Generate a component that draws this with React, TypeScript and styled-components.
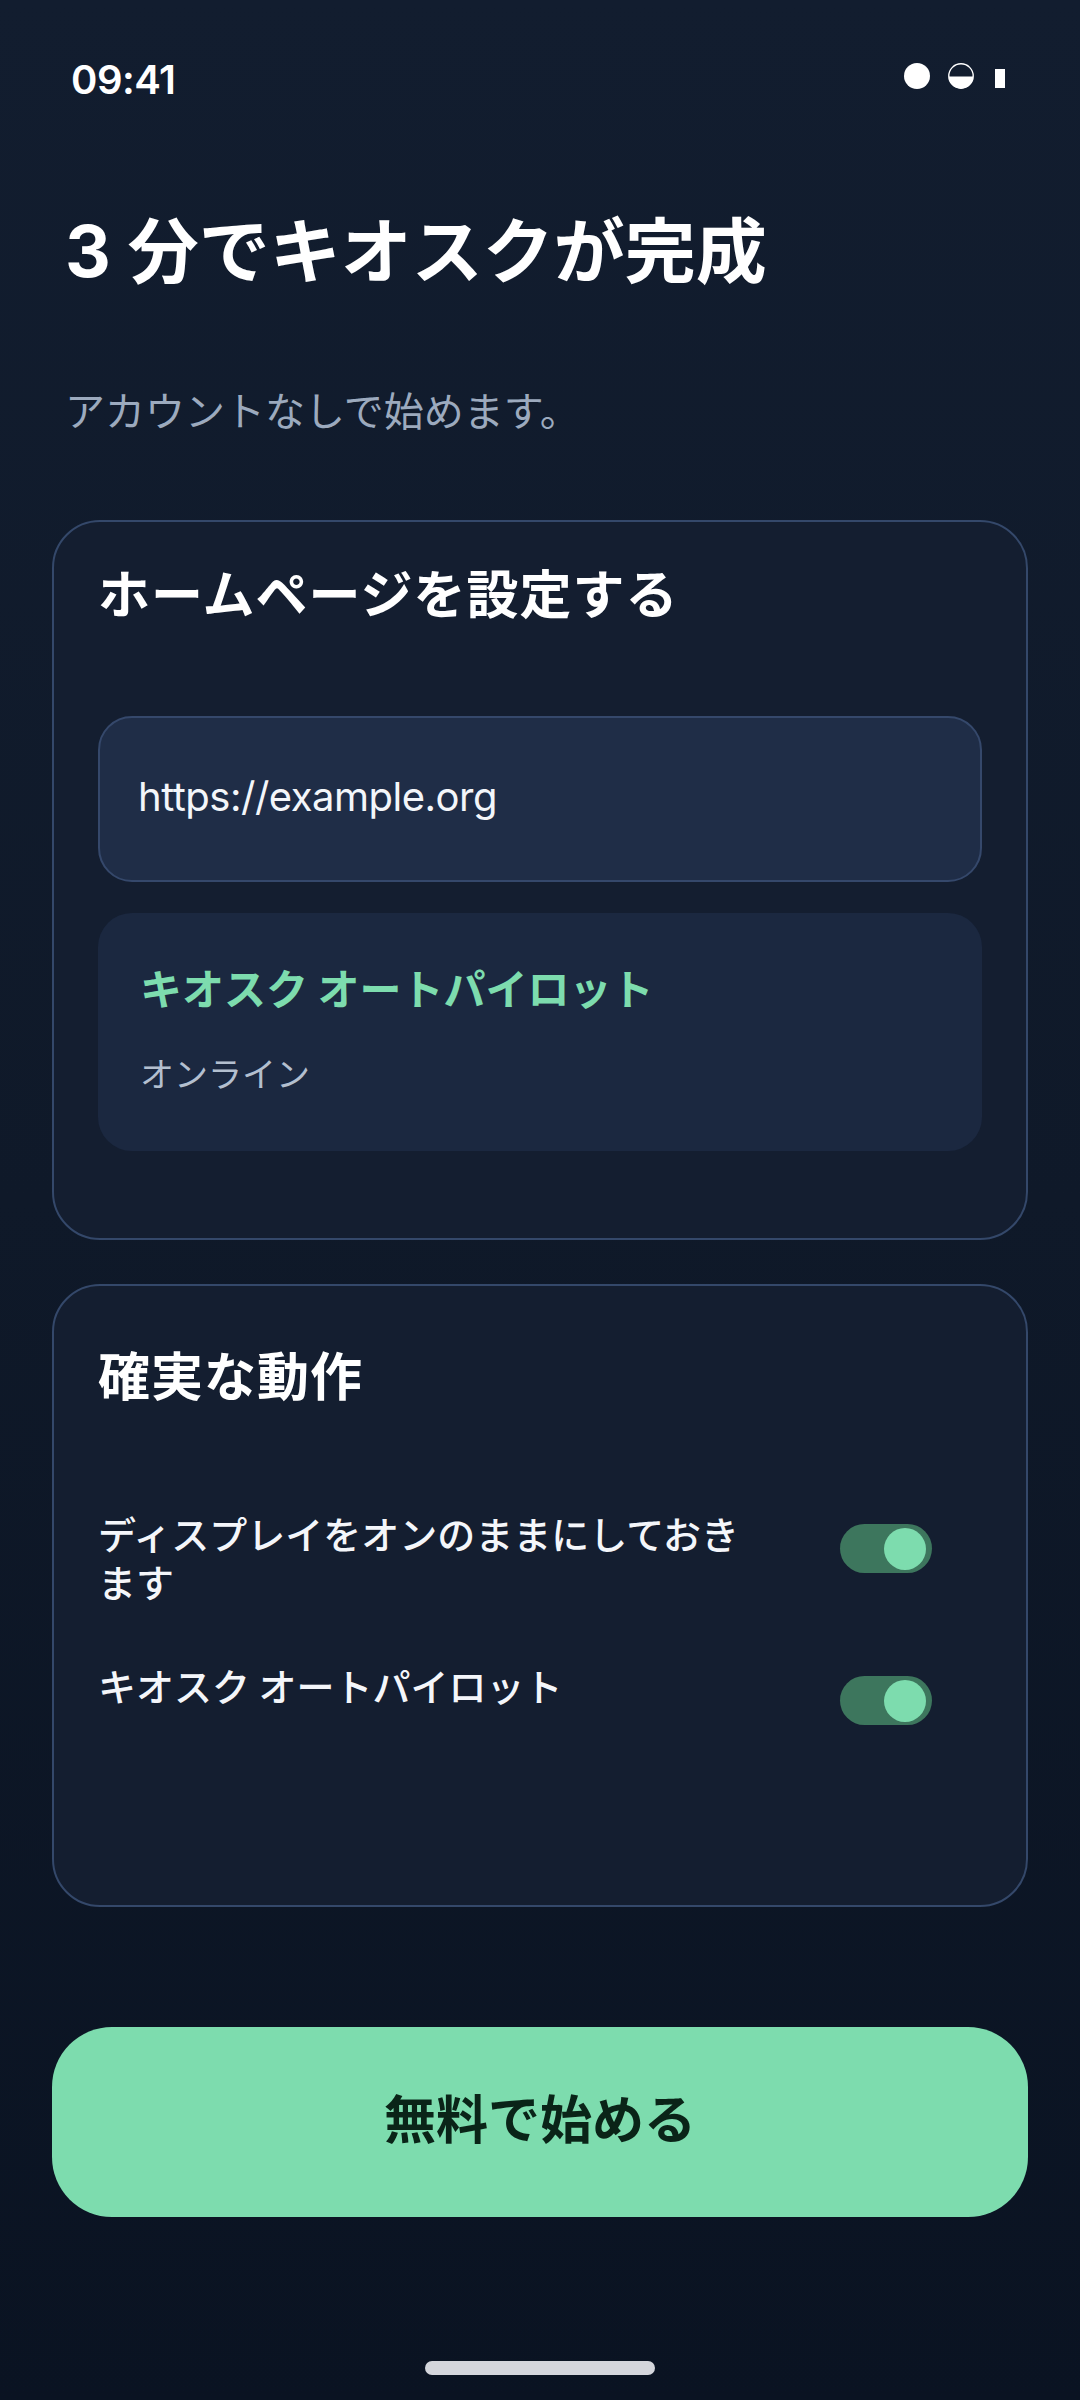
import React, { useState } from "react";
import styled, { createGlobalStyle } from "styled-components";

const GlobalStyle = createGlobalStyle`
  html, body {
    margin: 0;
    padding: 0;
    background: #0b1423;
  }
  body {
    font-family: "Inter", "Noto Sans CJK JP", sans-serif;
    -webkit-font-smoothing: antialiased;
  }
  * {
    box-sizing: border-box;
  }
`;

const Screen = styled.div`
  width: 1080px;
  min-height: 2400px;
  display: flex;
  flex-direction: column;
  background: linear-gradient(180deg, #121d2f 0%, #0f1929 50%, #0a1322 100%);
  color: #f1f5f9;
`;

const StatusBar = styled.div`
  height: 156px;
  padding: 0 75px 0 71px;
  display: flex;
  align-items: center;
  justify-content: space-between;
`;

const Time = styled.span`
  font-family: "Inter", sans-serif;
  font-size: 40px;
  font-weight: 600;
  letter-spacing: -0.5px;
  color: #ffffff;
  margin-top: 2px;
`;

const StatusIcons = styled.div`
  display: flex;
  align-items: center;
  gap: 18px;
  margin-top: -4px;
`;

const Dot = styled.span`
  width: 26px;
  height: 26px;
  border-radius: 50%;
  background: #ffffff;
`;

const Battery = styled.span`
  width: 10px;
  height: 19px;
  margin-left: 3px;
  margin-top: 4px;
  background: #ffffff;
`;

const Content = styled.main`
  flex: 1;
  display: flex;
  flex-direction: column;
  padding: 0 52px;
`;

const Header = styled.header`
  padding: 52px 13px 0;
`;

const Title = styled.h1`
  margin: 0;
  font-family: "Inter", "Noto Sans CJK JP", sans-serif;
  font-size: 71px;
  line-height: 86px;
  font-weight: 700;
  color: #ffffff;
`;

const Subtitle = styled.p`
  margin: 87px 0 0;
  font-family: "Noto Sans CJK JP", sans-serif;
  font-size: 40px;
  line-height: 56px;
  font-weight: 400;
  color: #9caabe;
`;

const Card = styled.section<{ padTop: number; padBottom: number; mt: number }>`
  margin-top: ${(p) => p.mt}px;
  padding: ${(p) => p.padTop}px 44px ${(p) => p.padBottom}px;
  border: 2px solid #34486a;
  border-radius: 48px;
  background: #141e30;
  display: flex;
  flex-direction: column;
`;

const CardTitle = styled.h2<{ gap: number }>`
  margin: 0 0 ${(p) => p.gap}px;
  font-family: "Noto Sans CJK JP", sans-serif;
  font-size: 52px;
  line-height: 64px;
  font-weight: 700;
  letter-spacing: 1px;
  color: #ffffff;
`;

const UrlField = styled.input`
  height: 166px;
  width: 100%;
  padding: 0 40px 6px 38px;
  border: 2px solid #35486b;
  border-radius: 34px;
  background: #1f2d47;
  color: #f3f6fa;
  font-family: "Inter", sans-serif;
  font-size: 40px;
  letter-spacing: -0.5px;
  outline: none;
`;

const StatusPanel = styled.div`
  margin-top: 31px;
  padding: 47px 42px 56px;
  border-radius: 34px;
  background: #1b2840;
  display: flex;
  flex-direction: column;
  gap: 37px;
`;

const PanelTitle = styled.div`
  font-family: "Noto Sans CJK JP", sans-serif;
  font-size: 42px;
  line-height: 54px;
  font-weight: 700;
  color: #7ddcae;
`;

const PanelState = styled.div`
  font-family: "Noto Sans CJK JP", sans-serif;
  font-size: 34px;
  line-height: 44px;
  color: #b3bfcf;
`;

const OptionList = styled.div`
  display: flex;
  flex-direction: column;
  gap: 59px;
`;

const OptionRow = styled.label`
  display: flex;
  align-items: flex-start;
  gap: 80px;
  padding-right: 50px;
  cursor: pointer;
`;

const OptionText = styled.span`
  flex: 1;
  margin-top: -3px;
  font-family: "Noto Sans CJK JP", sans-serif;
  font-size: 38px;
  line-height: 48px;
  font-weight: 500;
  color: #f4f6fa;
`;

const Track = styled.button<{ on: boolean }>`
  flex: none;
  margin-top: 12px;
  width: 92px;
  height: 49px;
  padding: 0 6px 0 4px;
  border: none;
  border-radius: 25px;
  background: ${(p) => (p.on ? "#3d765d" : "#334155")};
  display: flex;
  align-items: center;
  justify-content: ${(p) => (p.on ? "flex-end" : "flex-start")};
  cursor: pointer;
`;

const Knob = styled.span`
  width: 42px;
  height: 42px;
  border-radius: 50%;
  background: #7ddcae;
`;

const CtaButton = styled.button`
  margin-top: 120px;
  height: 190px;
  width: 100%;
  padding: 0 0 12px;
  border: none;
  border-radius: 60px;
  background: #7ddcae;
  color: #0a2418;
  font-family: "Noto Sans CJK JP", sans-serif;
  font-size: 52px;
  font-weight: 700;
  cursor: pointer;
`;

const HomeBar = styled.div`
  width: 230px;
  height: 14px;
  margin: 144px auto 25px;
  border-radius: 7px;
  background: #d4d6dc;
`;

const HalfCircle = () => (
  <svg width="26" height="26" viewBox="0 0 26 26">
    <circle cx="13" cy="13" r="12.2" fill="none" stroke="#ffffff" strokeWidth="1.4" />
    <path d="M0.8 13.5 H25.2 A12.2 12.2 0 0 1 0.8 13.5 Z" fill="#ffffff" />
  </svg>
);

const Toggle = ({ initial }: { initial: boolean }) => {
  const [on, setOn] = useState(initial);
  return (
    <Track on={on} type="button" onClick={() => setOn(!on)}>
      <Knob />
    </Track>
  );
};

const App = () => {
  const [url, setUrl] = useState("https://example.org");

  return (
    <Screen>
      <GlobalStyle />
      <StatusBar>
        <Time>09:41</Time>
        <StatusIcons>
          <Dot />
          <HalfCircle />
          <Battery />
        </StatusIcons>
      </StatusBar>

      <Content>
        <Header>
          <Title>3 分でキオスクが完成</Title>
          <Subtitle>アカウントなしで始めます。</Subtitle>
        </Header>

        <Card mt={83} padTop={38} padBottom={87}>
          <CardTitle gap={92}>ホームページを設定する</CardTitle>
          <UrlField value={url} onChange={(e) => setUrl(e.target.value)} />
          <StatusPanel>
            <PanelTitle>キオスク オートパイロット</PanelTitle>
            <PanelState>オンライン</PanelState>
          </StatusPanel>
        </Card>

        <Card mt={44} padTop={56} padBottom={180}>
          <CardTitle gap={106}>確実な動作</CardTitle>
          <OptionList>
            <OptionRow>
              <OptionText>ディスプレイをオンのままにしておきます</OptionText>
              <Toggle initial />
            </OptionRow>
            <OptionRow>
              <OptionText>キオスク オートパイロット</OptionText>
              <Toggle initial />
            </OptionRow>
          </OptionList>
        </Card>

        <CtaButton type="button">無料で始める</CtaButton>
        <HomeBar />
      </Content>
    </Screen>
  );
};

export default App;
